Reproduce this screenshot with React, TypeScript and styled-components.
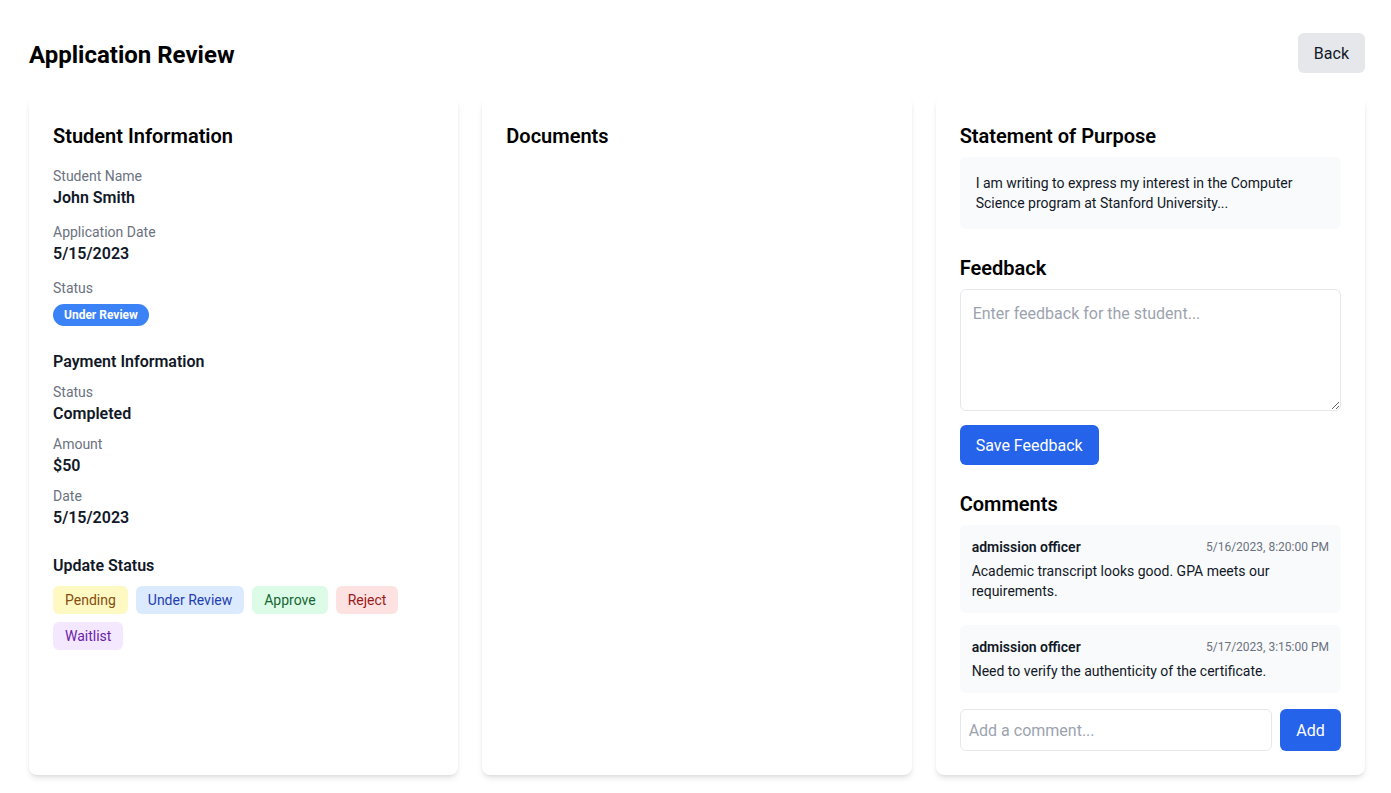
import React from "react";
import styled, { createGlobalStyle } from "styled-components";

const Global = createGlobalStyle`
  * { box-sizing: border-box; }
  body {
    margin: 0;
    background: #ffffff;
    font-family: "Segoe UI", Roboto, "Noto Sans", sans-serif;
    color: #111827;
  }
`;

const Page = styled.div`
  padding: 33px 26px 18px 29px;
`;

const Header = styled.header`
  display: flex;
  align-items: center;
  justify-content: space-between;
  height: 40px;
  margin-bottom: 24px;
`;

const Title = styled.h1`
  margin: 4px 0 0;
  font-size: 24px;
  line-height: 32px;
  font-weight: 700;
  color: #000;
`;

const BackButton = styled.button`
  height: 40px;
  padding: 0 16px;
  border: none;
  border-radius: 6px;
  background: #e5e7eb;
  color: #111827;
  font: inherit;
  font-size: 16px;
`;

const Grid = styled.div`
  display: grid;
  grid-template-columns: repeat(3, 1fr);
  gap: 24px;
`;

const Card = styled.section`
  background: #fff;
  border-radius: 8px;
  padding: 24px;
  box-shadow: 0 4px 6px -1px rgba(0, 0, 0, 0.1), 0 2px 4px -2px rgba(0, 0, 0, 0.1);
  display: flex;
  flex-direction: column;
`;

const CardTitle = styled.h2<{ $mb?: number }>`
  margin: 0 0 ${(p) => p.$mb ?? 8}px;
  padding-top: 2px;
  font-size: 20px;
  line-height: 26px;
  font-weight: 600;
  color: #000;
`;

const SubTitle = styled.h3`
  margin: 0 0 8px;
  font-size: 16px;
  line-height: 24px;
  font-weight: 600;
  color: #111827;
`;

const Fields = styled.div<{ $gap: number }>`
  display: flex;
  flex-direction: column;
  gap: ${(p) => p.$gap}px;
`;

const Field = styled.div`
  display: flex;
  flex-direction: column;
`;

const Label = styled.span`
  font-size: 14px;
  line-height: 20px;
  color: #6b7280;
`;

const Value = styled.span`
  font-size: 16px;
  line-height: 24px;
  font-weight: 600;
  color: #111827;
`;

const Badge = styled.span`
  align-self: flex-start;
  margin-top: 6px;
  padding: 3px 11px;
  border-radius: 9999px;
  background: #3b82f6;
  color: #fff;
  font-size: 12px;
  line-height: 16px;
  font-weight: 700;
`;

const Section = styled.div`
  margin-top: 24px;
`;

const StatusButtons = styled.div`
  display: flex;
  flex-wrap: wrap;
  gap: 8px;
`;

const tones: Record<string, { bg: string; fg: string }> = {
  yellow: { bg: "#fef9c3", fg: "#854d0e" },
  blue: { bg: "#dbeafe", fg: "#1e40af" },
  green: { bg: "#dcfce7", fg: "#166534" },
  red: { bg: "#fee2e2", fg: "#991b1b" },
  purple: { bg: "#f3e8ff", fg: "#6b21a8" },
};

const StatusButton = styled.button<{ $tone: string }>`
  height: 28px;
  padding: 0 12px;
  border: none;
  border-radius: 6px;
  background: ${(p) => tones[p.$tone].bg};
  color: ${(p) => tones[p.$tone].fg};
  font: inherit;
  font-size: 14px;
`;

const SopBox = styled.div`
  background: #f9fafb;
  border-radius: 6px;
  padding: 16px;
  font-size: 14px;
  line-height: 20px;
  color: #111827;
  margin-bottom: 24px;
`;

const TextArea = styled.textarea`
  display: block;
  width: 100%;
  padding: 12px;
  border: 1px solid #e5e7eb;
  border-radius: 6px;
  font: inherit;
  font-size: 16px;
  line-height: 24px;
  color: #111827;
  resize: vertical;
  &::placeholder { color: #9ca3af; }
`;

const PrimaryButton = styled.button`
  height: 40px;
  padding: 0 16px;
  border: none;
  border-radius: 6px;
  background: #2563eb;
  color: #fff;
  font: inherit;
  font-size: 16px;
`;

const SaveRow = styled.div`
  margin: 14px 0 24px;
`;

const CommentList = styled.div`
  display: flex;
  flex-direction: column;
  gap: 12px;
  margin-bottom: 16px;
`;

const Comment = styled.div`
  background: #f9fafb;
  border-radius: 6px;
  padding: 12px;
`;

const CommentHead = styled.div`
  display: flex;
  justify-content: space-between;
  align-items: center;
  margin-bottom: 4px;
`;

const Author = styled.span`
  font-size: 14px;
  line-height: 20px;
  font-weight: 600;
  color: #111827;
`;

const Stamp = styled.span`
  font-size: 12px;
  line-height: 16px;
  color: #6b7280;
`;

const CommentText = styled.p`
  margin: 0;
  font-size: 14px;
  line-height: 20px;
  color: #111827;
`;

const AddRow = styled.div`
  display: flex;
  gap: 8px;
`;

const Input = styled.input`
  flex: 1;
  min-width: 0;
  height: 42px;
  padding: 0 8px;
  border: 1px solid #e5e7eb;
  border-radius: 6px;
  font: inherit;
  font-size: 16px;
  &::placeholder { color: #9ca3af; }
`;

const AddButton = styled(PrimaryButton)`
  height: 42px;
  width: 61px;
  padding: 0;
`;

const comments = [
  {
    author: "admission officer",
    date: "5/16/2023, 8:20:00 PM",
    text: "Academic transcript looks good. GPA meets our requirements.",
  },
  {
    author: "admission officer",
    date: "5/17/2023, 3:15:00 PM",
    text: "Need to verify the authenticity of the certificate.",
  },
];

export default function App() {
  return (
    <>
      <Global />
      <Page>
        <Header>
          <Title>Application Review</Title>
          <BackButton>Back</BackButton>
        </Header>
        <Grid>
          <Card>
            <CardTitle $mb={17}>Student Information</CardTitle>
            <Fields $gap={12}>
              <Field>
                <Label>Student Name</Label>
                <Value>John Smith</Value>
              </Field>
              <Field>
                <Label>Application Date</Label>
                <Value>5/15/2023</Value>
              </Field>
              <Field>
                <Label>Status</Label>
                <Badge>Under Review</Badge>
              </Field>
            </Fields>
            <Section>
              <SubTitle>Payment Information</SubTitle>
              <Fields $gap={8}>
                <Field>
                  <Label>Status</Label>
                  <Value>Completed</Value>
                </Field>
                <Field>
                  <Label>Amount</Label>
                  <Value>$50</Value>
                </Field>
                <Field>
                  <Label>Date</Label>
                  <Value>5/15/2023</Value>
                </Field>
              </Fields>
            </Section>
            <Section>
              <SubTitle>Update Status</SubTitle>
              <StatusButtons>
                <StatusButton $tone="yellow">Pending</StatusButton>
                <StatusButton $tone="blue">Under Review</StatusButton>
                <StatusButton $tone="green">Approve</StatusButton>
                <StatusButton $tone="red">Reject</StatusButton>
                <StatusButton $tone="purple">Waitlist</StatusButton>
              </StatusButtons>
            </Section>
          </Card>
          <Card>
            <CardTitle>Documents</CardTitle>
          </Card>
          <Card>
            <CardTitle>Statement of Purpose</CardTitle>
            <SopBox>
              I am writing to express my interest in the Computer Science program at Stanford
              University...
            </SopBox>
            <CardTitle>Feedback</CardTitle>
            <TextArea rows={4} placeholder="Enter feedback for the student..." />
            <SaveRow>
              <PrimaryButton>Save Feedback</PrimaryButton>
            </SaveRow>
            <CardTitle>Comments</CardTitle>
            <CommentList>
              {comments.map((c) => (
                <Comment key={c.date}>
                  <CommentHead>
                    <Author>{c.author}</Author>
                    <Stamp>{c.date}</Stamp>
                  </CommentHead>
                  <CommentText>{c.text}</CommentText>
                </Comment>
              ))}
            </CommentList>
            <AddRow>
              <Input placeholder="Add a comment..." />
              <AddButton>Add</AddButton>
            </AddRow>
          </Card>
        </Grid>
      </Page>
    </>
  );
}
